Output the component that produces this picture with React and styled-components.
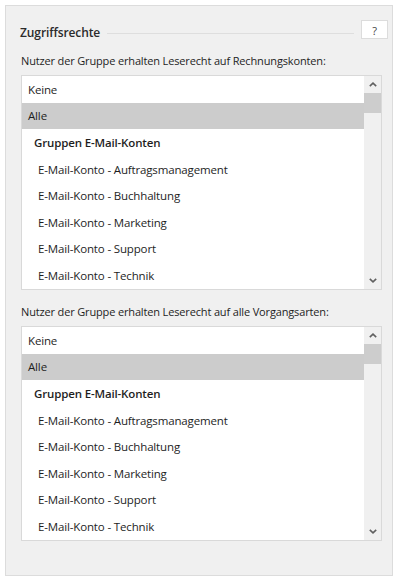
import styled, { createGlobalStyle } from "styled-components";

const GlobalStyle = createGlobalStyle`
  body {
    margin: 0;
    background: #ffffff;
    font-family: "Open Sans", "Liberation Sans", sans-serif;
    color: #1e1e1e;
  }
`;

const Panel = styled.section`
  box-sizing: border-box;
  margin: 5px;
  width: 388px;
  height: 571px;
  padding: 14px 4px 0 14px;
  background: #f0f0f0;
  border: 1px solid #dcdcdc;
`;

// Header
const Header = styled.div`
  display: flex;
  align-items: flex-start;
  height: 19px;
  margin-bottom: 14px;
`;

const Title = styled.h3`
  margin: 0;
  padding-top: 5px;
  font-size: 12px;
  line-height: 16px;
  font-weight: 600;
  letter-spacing: -0.1px;
  color: #2b2b2b;
`;

const TitleLine = styled.div`
  flex: 1;
  height: 1px;
  margin: 13px 7px 0 7px;
  background: #dedede;
`;

const HelpButton = styled.button`
  box-sizing: border-box;
  width: 27px;
  height: 19px;
  padding: 1px 0 0;
  background: #fff;
  border: 1px solid #dcdcdc;
  font-family: inherit;
  font-size: 11px;
  color: #444;
`;

// Section
const Label = styled.div`
  font-size: 11px;
  line-height: 16px;
  letter-spacing: -0.15px;
  margin-bottom: 6px;
  margin-left: 1px;
`;

const ListSection = styled.div`
  margin-bottom: ${(p) => p.gap || "14px"};
`;

const ListBox = styled.div`
  box-sizing: border-box;
  display: flex;
  width: 361px;
  height: 215px;
  margin-left: 1px;
  background: #fff;
  border: 1px solid #d9d9d9;
`;

const Rows = styled.ul`
  flex: 1;
  margin: 0;
  padding: 0;
  list-style: none;
`;

const Row = styled.li`
  display: flex;
  align-items: center;
  height: 26.6px;
  padding-left: ${(p) => p.indent || "6px"};
  font-size: 11.5px;
  letter-spacing: -0.15px;
  font-weight: ${(p) => (p.bold ? 600 : 400)};
  background: ${(p) => (p.selected ? "#cccccc" : "transparent")};
  white-space: nowrap;
`;

// Scrollbar
const ScrollBar = styled.div`
  display: flex;
  flex-direction: column;
  width: 17px;
  background: #f0f0f0;
`;

const ScrollArrow = styled.div`
  display: flex;
  align-items: center;
  justify-content: center;
  height: 17px;
`;

const Track = styled.div`
  flex: 1;
`;

const Thumb = styled.div`
  height: 20px;
  background: #cdcdcd;
`;

const Chevron = ({ up }) => (
  <svg width="8" height="5" viewBox="0 0 8 5">
    <path
      d={up ? "M0.8 4.2 L4 1.2 L7.2 4.2" : "M0.8 0.8 L4 3.8 L7.2 0.8"}
      fill="none"
      stroke="#606060"
      strokeWidth="1.6"
    />
  </svg>
);

const items = [
  { text: "Keine" },
  { text: "Alle", selected: true },
  { text: "Gruppen E-Mail-Konten", bold: true, indent: "12px" },
  { text: "E-Mail-Konto - Auftragsmanagement", indent: "16px" },
  { text: "E-Mail-Konto - Buchhaltung", indent: "16px" },
  { text: "E-Mail-Konto - Marketing", indent: "16px" },
  { text: "E-Mail-Konto - Support", indent: "16px" },
  { text: "E-Mail-Konto - Technik", indent: "16px" },
];

const AccountList = ({ label, gap }) => (
  <ListSection gap={gap}>
    <Label>{label}</Label>
    <ListBox>
      <Rows>
        {items.map((it) => (
          <Row key={it.text} selected={it.selected} bold={it.bold} indent={it.indent}>
            {it.text}
          </Row>
        ))}
      </Rows>
      <ScrollBar>
        <ScrollArrow>
          <Chevron up />
        </ScrollArrow>
        <Track>
          <Thumb />
        </Track>
        <ScrollArrow>
          <Chevron />
        </ScrollArrow>
      </ScrollBar>
    </ListBox>
  </ListSection>
);

const App = () => {
  return (
    <>
      <GlobalStyle />
      <Panel>
        <Header>
          <Title>Zugriffsrechte</Title>
          <TitleLine />
          <HelpButton>?</HelpButton>
        </Header>
        <AccountList label="Nutzer der Gruppe erhalten Leserecht auf Rechnungskonten:" gap="14px" />
        <AccountList label="Nutzer der Gruppe erhalten Leserecht auf alle Vorgangsarten:" gap="0" />
      </Panel>
    </>
  );
};

export default App;
